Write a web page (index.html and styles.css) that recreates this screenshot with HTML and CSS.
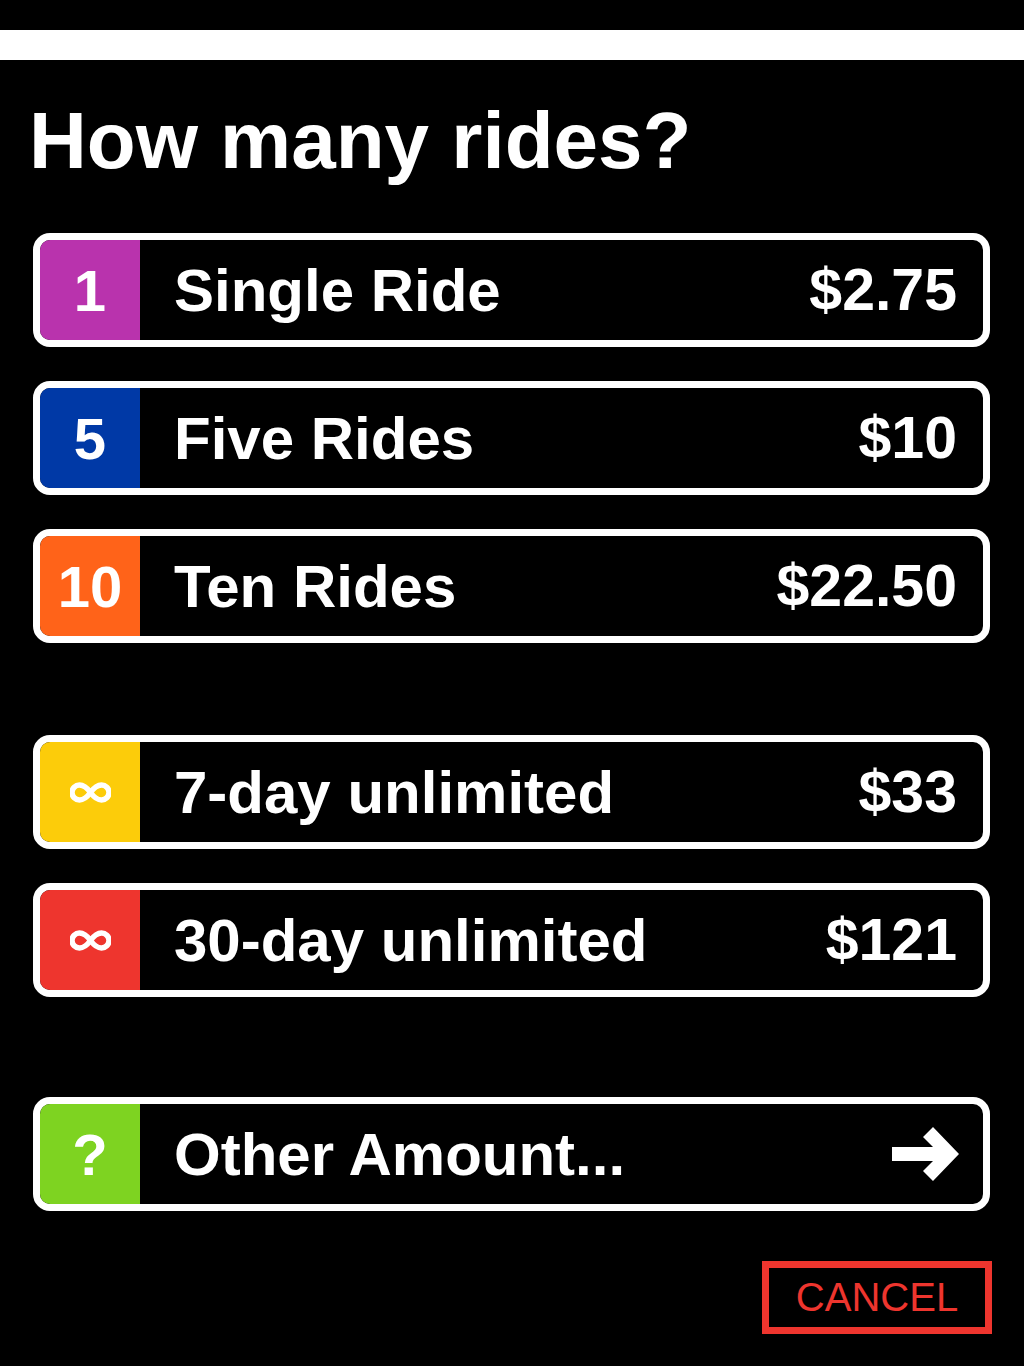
FILE: index.html
```html
<!DOCTYPE html>
<html lang="en">
<head>
<meta charset="utf-8">
<title>How many rides?</title>
<link rel="stylesheet" href="styles.css">
</head>
<body>
<div class="topbar"></div>
<h1 class="title">How many rides?</h1>
<div class="options">
  <div class="group">
    <button class="row"><span class="badge purple">1</span><span class="label">Single Ride</span><span class="price">$2.75</span></button>
    <button class="row"><span class="badge blue">5</span><span class="label">Five Rides</span><span class="price">$10</span></button>
    <button class="row"><span class="badge orange">10</span><span class="label">Ten Rides</span><span class="price">$22.50</span></button>
  </div>
  <div class="group">
    <button class="row"><span class="badge yellow"><svg class="inf" viewBox="0 0 41 21"><path d="M20.5 10.5 C16.5 5 13 3 9.5 3 A7.5 7.5 0 0 0 9.5 18 C13 18 16.5 16 20.5 10.5 C24.5 5 28 3 31.5 3 A7.5 7.5 0 0 1 31.5 18 C28 18 24.5 16 20.5 10.5 Z"/></svg></span><span class="label">7-day unlimited</span><span class="price">$33</span></button>
    <button class="row"><span class="badge red"><svg class="inf" viewBox="0 0 41 21"><path d="M20.5 10.5 C16.5 5 13 3 9.5 3 A7.5 7.5 0 0 0 9.5 18 C13 18 16.5 16 20.5 10.5 C24.5 5 28 3 31.5 3 A7.5 7.5 0 0 1 31.5 18 C28 18 24.5 16 20.5 10.5 Z"/></svg></span><span class="label">30-day unlimited</span><span class="price">$121</span></button>
  </div>
  <div class="group">
    <button class="row"><span class="badge green">?</span><span class="label">Other Amount...</span><span class="price"><svg class="arrow" viewBox="0 0 67 54"><rect x="0" y="20" width="54" height="14"/><polygon points="31,10 41,0 67,27 41,54 31,44 48,27"/></svg></span></button>
  </div>
</div>
<div class="footer"><button class="cancel">CANCEL</button></div>
</body>
</html>
```

FILE: styles.css
```css
html, body {
  margin: 0;
  padding: 0;
  background: #000;
}
body {
  width: 1024px;
  height: 1366px;
  font-family: "Liberation Sans", Arial, Helvetica, sans-serif;
  color: #fff;
  overflow: hidden;
}
.topbar {
  margin-top: 30px;
  height: 30px;
  background: #fff;
}
.title {
  margin: 41px 0 0 29px;
  font-size: 80px;
  line-height: 80px;
  font-weight: bold;
}
.options {
  margin: 52px 34px 0 33px;
  display: flex;
  flex-direction: column;
  gap: 92px;
}
.group {
  display: flex;
  flex-direction: column;
  gap: 34px;
}
.group:last-child {
  margin-top: 8px;
}
.row {
  display: flex;
  align-items: center;
  box-sizing: border-box;
  width: 957px;
  height: 114px;
  padding: 0 26px 0 0;
  border: 7px solid #fff;
  border-radius: 17px;
  background: #000;
  overflow: hidden;
  font-family: inherit;
  color: #fff;
  cursor: pointer;
}
.badge {
  flex: 0 0 100px;
  height: 100px;
  display: flex;
  align-items: center;
  justify-content: center;
  font-size: 58px;
  font-weight: bold;
}
.purple { background: #b933ad; }
.blue { background: #0039a6; }
.orange { background: #ff6319; }
.yellow { background: #fccc0a; }
.red { background: #ee352e; }
.green { background: #7ed321; }
.inf {
  width: 41px;
  height: 21px;
  fill: none;
  stroke: #fff;
  stroke-width: 5.5;
}
.label {
  flex: 1;
  text-align: left;
  padding-left: 34px;
  font-size: 60px;
  font-weight: bold;
}
.price {
  font-size: 59px;
  font-weight: bold;
  display: flex;
  align-items: center;
}
.arrow {
  width: 67px;
  height: 54px;
  fill: #fff;
  margin-right: -2px;
}
.footer {
  display: flex;
  justify-content: flex-end;
  margin: 50px 32px 0 0;
}
.cancel {
  box-sizing: border-box;
  width: 230px;
  height: 73px;
  border: 7px solid #ee352e;
  background: #000;
  color: #ee352e;
  font-family: "Liberation Sans", Arial, Helvetica, sans-serif;
  font-size: 40px;
  padding: 0;
  cursor: pointer;
}
```
